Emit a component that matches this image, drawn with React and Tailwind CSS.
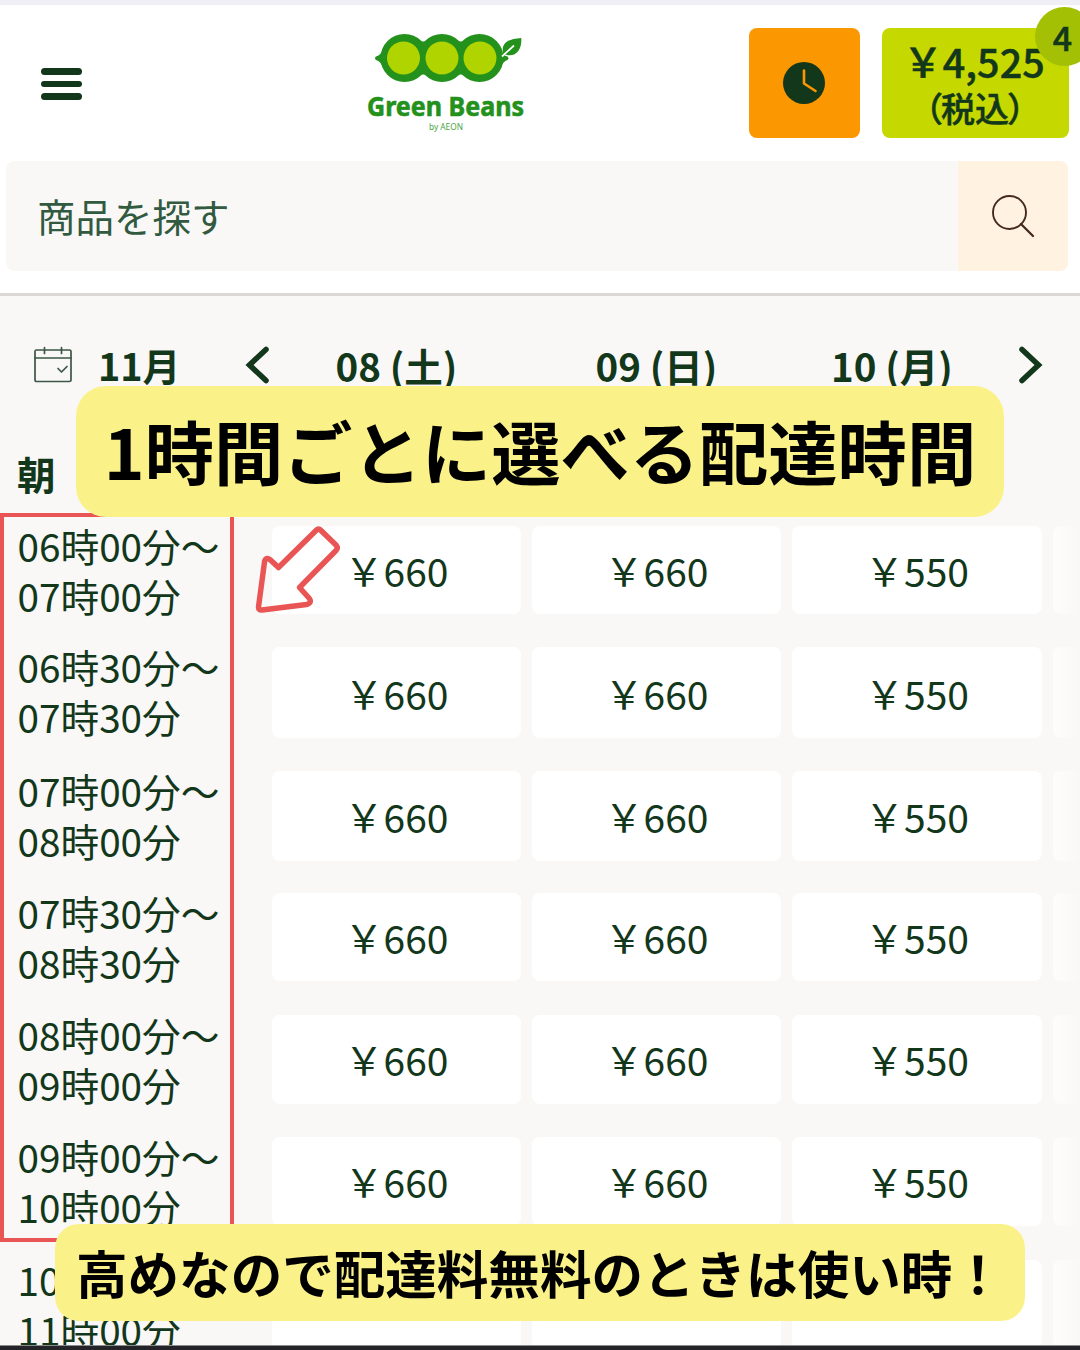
const slots = [
  { from: "06時00分〜", to: "07時00分", card: "h-[88px]" },
  { from: "06時30分〜", to: "07時30分", card: "h-[91px] pt-[2px]" },
  { from: "07時00分〜", to: "08時00分", card: "h-[90px]" },
  { from: "07時30分〜", to: "08時30分", card: "h-[88px]" },
  { from: "08時00分〜", to: "09時00分", card: "h-[89px]" },
  { from: "09時00分〜", to: "10時00分", card: "h-[89px]" },
  { from: "10時00分〜", to: "11時00分", card: "h-[89px] pb-[4px]" },
];

const prices = ["660", "660", "550"];

function Yen({ amount }) {
  return (
    <>
      <span className="relative -top-px">￥</span>
      {amount}
    </>
  );
}

function Logo() {
  return (
    <svg width="170" height="106" viewBox="360 30 170 106" role="img" aria-label="Green Beans by AEON">
      <g fill="#23911b">
        <circle cx="404.500" cy="58" r="24" />
        <circle cx="442" cy="58" r="24" />
        <circle cx="479.500" cy="58" r="24" />
        <path d="M412 36 Q423 47 434 36 V80 Q423 69 412 80Z M450 36 Q461 47 472 36 V80 Q461 69 450 80Z" />
        <path d="M383 50 Q380 55.500 376 56.500 Q374 58 376 60 Q380 61 383 67Z M500 50 Q504 56 507.500 56.500 Q509.500 58 507.500 60 Q504 61 500 67Z" />
        <path d="M503.500 55.500 C500.500 44 506 39 521.300 38 C522 51 515 58.500 503.500 54Z" />
      </g>
      <path d="M502 56.500L514 45.500" stroke="#fff" strokeWidth="1.7" fill="none" />
      <g fill="#afd400">
        <circle cx="403.500" cy="58" r="16.500" />
        <circle cx="442" cy="58" r="16.500" />
        <circle cx="480" cy="58" r="16.500" />
      </g>
      <text x="367" y="116" textLength="157" lengthAdjust="spacingAndGlyphs" stroke="#23911b" strokeWidth="0.6" className="fill-[#23911b] font-['Noto_Sans',sans-serif] text-[27px] font-bold">
        Green Beans
      </text>
      <text x="429" y="129.700" textLength="34" lengthAdjust="spacingAndGlyphs" className="fill-[#4ba645] font-['Noto_Sans',sans-serif] text-[9px]">
        by AEON
      </text>
    </svg>
  );
}

function Header() {
  return (
    <header className="h-[296px] border-t-[5px] border-b-[3px] border-t-[#f0eff5] border-b-[#dad9d7] bg-white">
      <div className="flex h-[156px] items-start">
        <button className="mt-[63px] ml-[41px] flex w-[41px] flex-col gap-[6px]" aria-label="メニュー">
          <span className="h-[6.500px] w-full rounded-full bg-[#12371b]" />
          <span className="h-[6.500px] w-full rounded-full bg-[#12371b]" />
          <span className="h-[6.500px] w-full rounded-full bg-[#12371b]" />
        </button>
        <div className="mt-[25px] ml-[278px]">
          <Logo />
        </div>
        <button className="mt-[23px] ml-[219px] flex h-[110px] w-[110.500px] items-center justify-center rounded-[8px] bg-[#fb9700]" aria-label="配達時間">
          <svg width="42" height="42" viewBox="0 0 42 42">
            <circle cx="21" cy="21" r="21" fill="#12371b" />
            <path d="M21 8.500V21.500L32.500 29" fill="none" stroke="#fb9700" strokeWidth="2.6" strokeLinecap="round" strokeLinejoin="round" />
          </svg>
        </button>
        <button className="relative mt-[23px] ml-[22px] flex h-[110px] w-[187px] flex-col items-center rounded-[8px] bg-[#c5d900] pt-[8px] font-medium [-webkit-text-stroke:0.5px_#12371b]">
          <span className="mr-[2px] text-[39.500px] leading-[50px] whitespace-nowrap">
            <Yen amount="4,525" />
          </span>
          <span className="pt-px text-[34px] leading-[42px] whitespace-nowrap">
            <span className="-mr-[2px]">（</span>税込<span className="-ml-[2px]">）</span>
          </span>
          <span className="absolute top-[-21px] left-[153.500px] flex size-[59px] items-center justify-center rounded-full bg-[#a4c005] pr-[4px] text-[34px] leading-none">
            4
          </span>
        </button>
      </div>
      <div className="ml-[6px] flex h-[110px] w-[1062px] overflow-hidden rounded-[8px]">
        <div className="flex flex-1 items-center bg-[#f9f8f6] pb-[2px] pl-[31px] text-[38.500px] leading-none text-[#315a40]">商品を探す</div>
        <button className="flex w-[110px] items-center justify-center bg-[#fff2e0]" aria-label="検索">
          <svg width="44" height="44" viewBox="0 0 44 44" fill="none" stroke="#43291f" strokeWidth="1.9" strokeLinecap="round">
            <circle cx="18.500" cy="18.500" r="16.500" />
            <path d="M30 30L42 42" strokeWidth="2.300" />
          </svg>
        </button>
      </div>
    </header>
  );
}

function Chevron({ flip }) {
  return (
    <svg width="24" height="38" viewBox="0 0 24 38" fill="none" stroke="#12371b" strokeWidth="5.500" strokeLinecap="round" className={flip ? "rotate-180" : ""}>
      <path d="M21 3.500L4.500 19L21 34.500" />
    </svg>
  );
}

function DateBar() {
  return (
    <div className="flex h-[138px] items-center text-[38.500px] leading-none font-bold whitespace-nowrap">
      <svg width="40" height="38" viewBox="0 0 40 38" fill="none" stroke="#3c5746" strokeWidth="1.700" strokeLinecap="round" strokeLinejoin="round" className="ml-[33px]">
        <rect x="2" y="4" width="36" height="31.500" rx="1.500" />
        <path d="M2 12H38M11.500 1.500V7.500M28.500 1.500V7.500M25 22.500L28.500 26L34 20.500" />
      </svg>
      <span className="ml-[25px] w-[147px] text-[37.800px]">11月</span>
      <Chevron />
      <div className="ml-[3px] w-[249px] text-center">08 (土)</div>
      <div className="ml-[11px] w-[249px] text-center">09 (日)</div>
      <div className="w-[222px] text-center">10 (月)</div>
      <div className="ml-[16px]">
        <Chevron flip />
      </div>
    </div>
  );
}

function Schedule() {
  return (
    <div className="grid grid-rows-[121px_124px_122px_122px_122px_123px_122px]">
      {slots.map((slot) => (
        <div key={slot.from} className="flex">
          <div className="-mt-[6px] ml-[17.500px] w-[254.500px] text-[38.700px] leading-[50px] whitespace-nowrap">
            <div>{slot.from}</div>
            <div>{slot.to}</div>
          </div>
          <div className="grid grid-cols-[249px_249px_250px_27px] items-start gap-[11px]">
            {prices.map((price, i) => (
              <div key={i} className={`flex items-center justify-center rounded-[8px] bg-white text-[39px] leading-none ${slot.card}`}>
                <Yen amount={price} />
              </div>
            ))}
            <div className={`rounded-l-[8px] bg-linear-to-r from-[#fdfdfc] to-[#f9f8f6] ${slot.card}`} />
          </div>
        </div>
      ))}
    </div>
  );
}

export default function App() {
  return (
    <div className="relative h-[1350px] w-[1080px] overflow-hidden bg-[#f9f8f6] font-['Noto_Sans_CJK_JP',sans-serif] text-[#12371b]">
      <Header />
      <DateBar />
      <div className="flex h-[92px] items-start pt-[19px] pl-[17px] text-[38.500px] leading-[40px] font-bold">朝</div>
      <Schedule />

      <div className="absolute top-[513px] left-0 h-[729px] w-[234px] border-4 border-[#e95555]" />
      <svg className="absolute top-[520px] left-[250px]" width="96" height="98" viewBox="250 520 96 98" fill="none" stroke="#e95555" strokeWidth="5.500" strokeLinejoin="round">
        <path d="M316 530.500Q318.500 528 321 530.500L336 545Q338.500 548 336 550.500L299.500 587.500L308.500 597.500Q313 602.500 306.500 604.500L262 610Q258.500 610.500 258.500 607L264.500 562Q265.500 556 270.500 560L278.500 567.500Z" />
      </svg>
      <div className="absolute top-[386px] left-[76px] flex h-[131px] w-[928px] items-center justify-center rounded-[30px] bg-[#faf289] pb-[2px] text-[69.300px] leading-none font-bold whitespace-nowrap text-black">
        1時間ごとに選べる配達時間
      </div>
      <div className="absolute top-[1224px] left-[55px] flex h-[97px] w-[970px] items-center rounded-[24px] bg-[#faf289] pb-[1px] pl-[21px] text-[51.550px] leading-none font-bold whitespace-nowrap text-black">
        高めなので配達料無料のときは使い時！
      </div>
      <div className="absolute bottom-0 left-0 h-[5px] w-full border-t border-[#8b8b8d] bg-[#242428]" />
    </div>
  );
}
